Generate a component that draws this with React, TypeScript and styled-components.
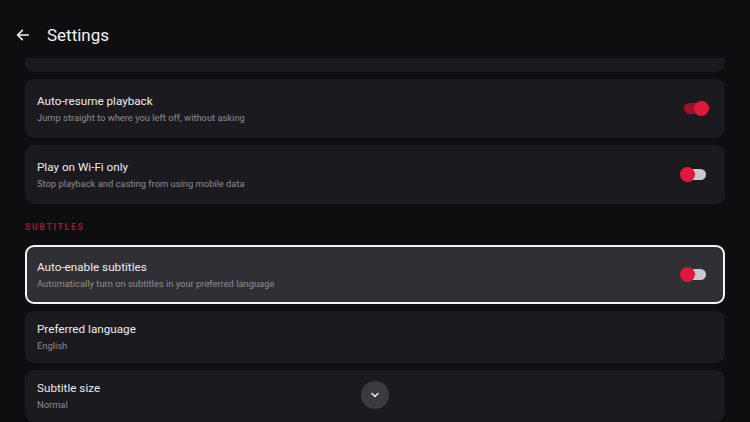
import React, { useState } from "react";
import styled, { createGlobalStyle } from "styled-components";

const GlobalStyle = createGlobalStyle`
  html, body { margin: 0; padding: 0; background: #0e0e11; }
  body { font-family: Roboto, "Noto Sans", "Liberation Sans", sans-serif; color: #e9e9ec; }
  * { box-sizing: border-box; }
`;

const Screen = styled.div`
  width: 750px;
  height: 422px;
  display: flex;
  flex-direction: column;
  overflow: hidden;
  position: relative;
  background: #0e0e11;
`;

const Header = styled.header`
  height: 58px;
  flex: 0 0 58px;
  display: flex;
  align-items: center;
  gap: 15px;
  padding: 12px 0 0 14px;
  position: relative;
  z-index: 1;
  background: #0e0e11;
`;

const BackButton = styled.button`
  width: 18px;
  height: 18px;
  padding: 0;
  border: 0;
  background: none;
  color: #f0f0f2;
  display: flex;
  align-items: center;
  justify-content: center;
`;

const Title = styled.h1`
  margin: 0;
  font-size: 17px;
  font-weight: 400;
  color: #f2f2f4;
`;

const Viewport = styled.div`
  flex: 1;
  overflow: hidden;
  padding: 0 25px;
`;

const List = styled.div<{ $offset?: number }>`
  display: flex;
  flex-direction: column;
  gap: 7px;
  margin-top: ${(p) => p.$offset ?? 0}px;
`;

const Card = styled.div<{ $focused?: boolean; $tall?: boolean }>`
  height: ${(p) => (p.$tall ? 59 : 52)}px;
  border-radius: 9px;
  background: ${(p) => (p.$focused ? "#303034" : "#1b1b1f")};
  border: ${(p) => (p.$focused ? "2px solid #f4f4f6" : "0")};
  display: flex;
  align-items: center;
  justify-content: space-between;
  padding: 0 ${(p) => (p.$focused ? 17 : 19)}px 0 ${(p) => (p.$focused ? 10 : 12)}px;
`;

const Texts = styled.div`
  display: flex;
  flex-direction: column;
  gap: 4px;
`;

const ItemTitle = styled.div`
  font-size: 11.7px;
  line-height: 14px;
  color: #ececef;
`;

const ItemSub = styled.div`
  font-size: 9.35px;
  line-height: 12px;
  color: #8c8c92;
`;

const SectionLabel = styled.div`
  font-size: 8.5px;
  font-weight: 700;
  letter-spacing: 1.75px;
  color: #a3162e;
  padding: 18px 0 12px 0;
  line-height: 11px;
`;

const Track = styled.div<{ $on: boolean }>`
  position: relative;
  width: 22px;
  height: 11px;
  border-radius: 6px;
  background: ${(p) => (p.$on ? "#9c1129" : "#c9c9cf")};
`;

const Thumb = styled.div<{ $on: boolean }>`
  position: absolute;
  top: 50%;
  width: 15px;
  height: 15px;
  margin-top: -7.5px;
  border-radius: 50%;
  background: #e1183c;
  left: ${(p) => (p.$on ? "10px" : "-4px")};
`;

const ScrollHint = styled.div`
  position: absolute;
  left: 361px;
  top: 381px;
  width: 28px;
  height: 28px;
  border-radius: 50%;
  background: #3a3a3f;
  display: flex;
  align-items: center;
  justify-content: center;
  color: #ededf0;
`;

const Toggle = ({ on }: { on: boolean }) => (
  <Track $on={on}>
    <Thumb $on={on} />
  </Track>
);

type Item = { title?: string; sub?: string; toggle?: boolean; on?: boolean; focused?: boolean };

const Row = ({ item }: { item: Item }) => (
  <Card $focused={item.focused} $tall={item.toggle}>
    {item.title && (
      <Texts>
        <ItemTitle>{item.title}</ItemTitle>
        <ItemSub>{item.sub}</ItemSub>
      </Texts>
    )}
    {item.toggle && item.title && <Toggle on={!!item.on} />}
  </Card>
);

export default function App() {
  const [playback] = useState<Item[]>([
    { toggle: true },
    { title: "Auto-resume playback", sub: "Jump straight to where you left off, without asking", toggle: true, on: true },
    { title: "Play on Wi-Fi only", sub: "Stop playback and casting from using mobile data", toggle: true, on: false },
  ]);
  const [subtitles] = useState<Item[]>([
    { title: "Auto-enable subtitles", sub: "Automatically turn on subtitles in your preferred language", toggle: true, on: false, focused: true },
    { title: "Preferred language", sub: "English" },
    { title: "Subtitle size", sub: "Normal" },
  ]);

  return (
    <Screen>
      <GlobalStyle />
      <Header>
        <BackButton aria-label="Back">
          <svg width="16" height="16" viewBox="0 0 24 24" fill="none" stroke="currentColor" strokeWidth="2.4" strokeLinecap="round" strokeLinejoin="round">
            <path d="M20 12H4" />
            <path d="M11 5l-7 7 7 7" />
          </svg>
        </BackButton>
        <Title>Settings</Title>
      </Header>
      <Viewport>
        <List $offset={-45}>
          {playback.map((it, i) => (
            <Row key={i} item={it} />
          ))}
        </List>
        <SectionLabel>SUBTITLES</SectionLabel>
        <List>
          {subtitles.map((it, i) => (
            <Row key={i} item={it} />
          ))}
        </List>
      </Viewport>
      <ScrollHint>
        <svg width="12" height="12" viewBox="0 0 24 24" fill="none" stroke="currentColor" strokeWidth="3" strokeLinecap="round" strokeLinejoin="round">
          <path d="M6 9l6 6 6-6" />
        </svg>
      </ScrollHint>
    </Screen>
  );
}
